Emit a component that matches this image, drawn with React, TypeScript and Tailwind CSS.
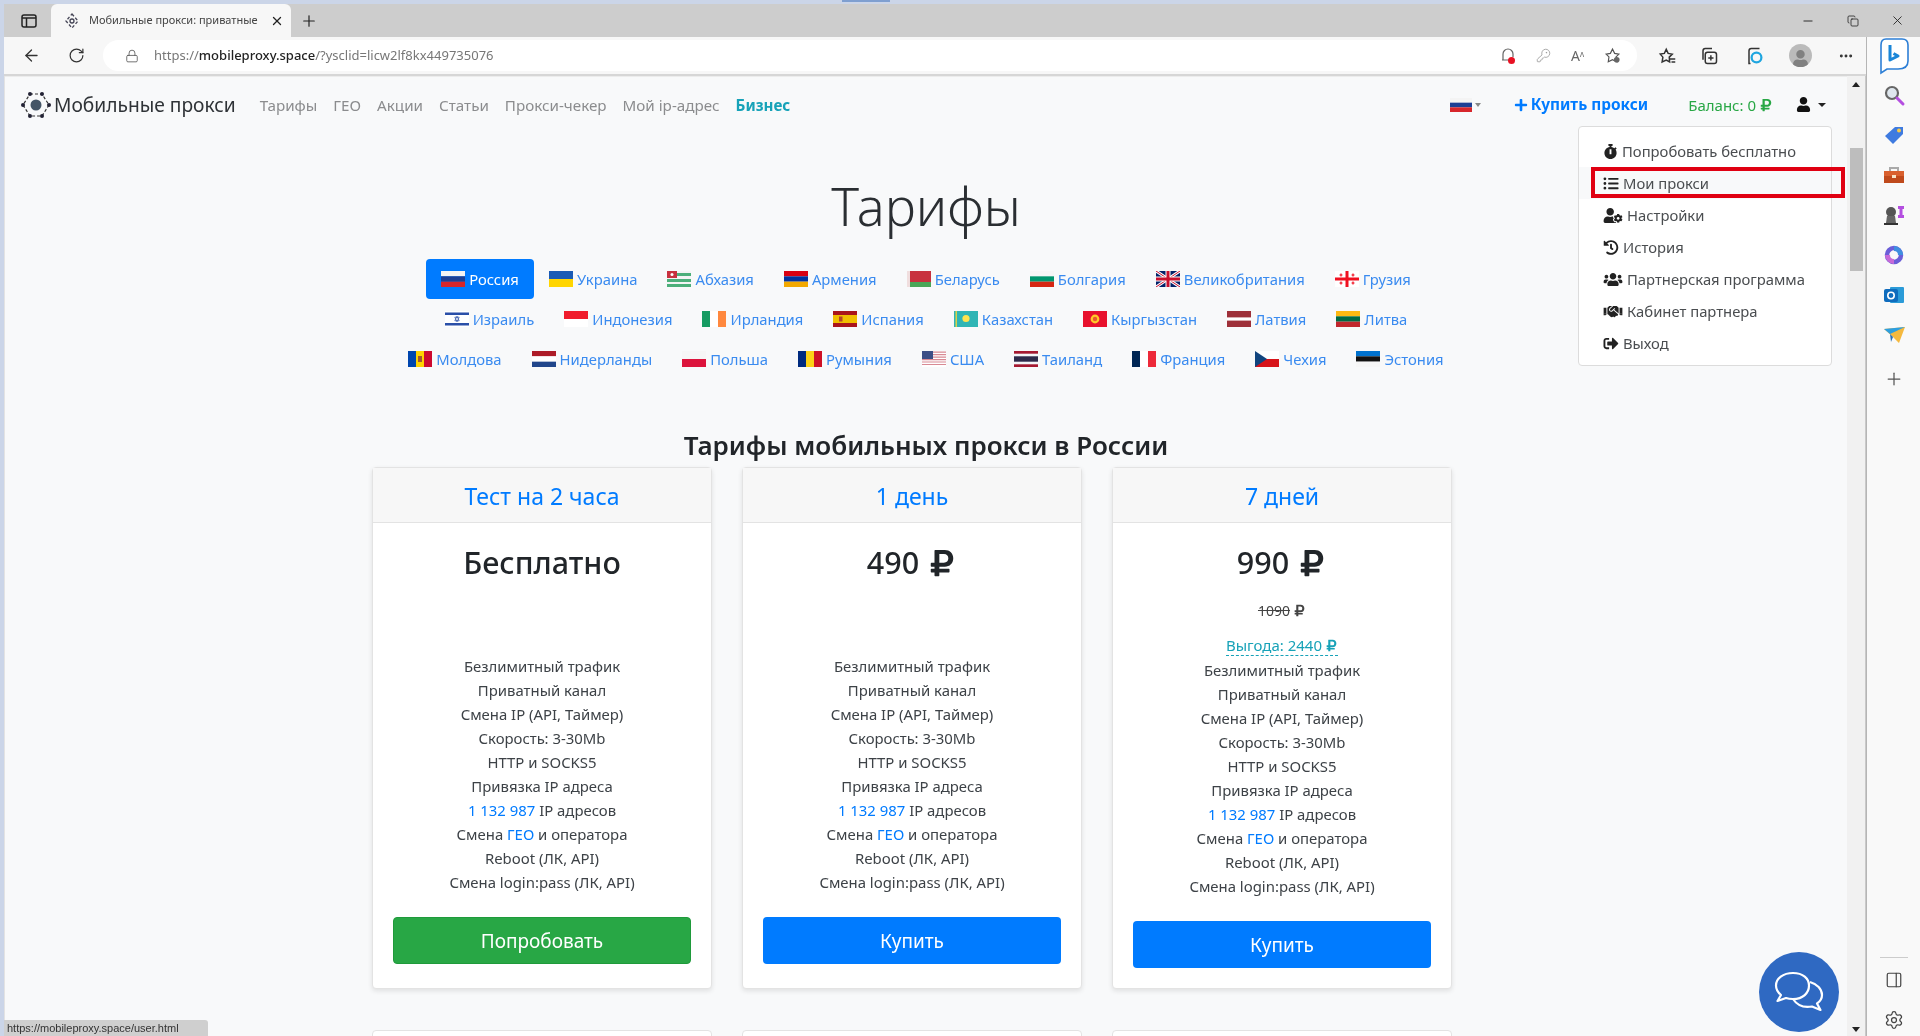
import React from "react";
import { ArrowLeft, RotateCw, Lock, Plus, X, Minus, Copy, Ellipsis, KeyRound, PanelRight, Settings } from "lucide-react";
import { FaPlus, FaUser, FaRubleSign, FaStopwatch, FaListUl, FaUserCog, FaHistory, FaUsers, FaHandshake, FaSignOutAlt } from "react-icons/fa";

const F = ({ children }: { children: React.ReactNode }) => (
  <svg width="24" height="16" viewBox="0 0 24 16" className="shrink-0">{children}</svg>
);
const H3 = ({ a, b, c }: { a: string; b: string; c: string }) => (
  <F>
    <rect width="24" height="5.34" fill={a} />
    <rect y="5.33" width="24" height="5.34" fill={b} />
    <rect y="10.66" width="24" height="5.34" fill={c} />
  </F>
);
const V3 = ({ a, b, c }: { a: string; b: string; c: string }) => (
  <F>
    <rect width="8" height="16" fill={a} />
    <rect x="8" width="8" height="16" fill={b} />
    <rect x="16" width="8" height="16" fill={c} />
  </F>
);
const flags: Record<string, React.ReactNode> = {
  ru: <H3 a="#f4f4f4" b="#1c3f94" c="#d7262b" />,
  ua: <F><rect width="24" height="8" fill="#1a5bb5" /><rect y="8" width="24" height="8" fill="#ffd500" /></F>,
  ab: <F><rect width="24" height="16" fill="#f4f4f4" /><rect y="2" width="24" height="3" fill="#4caf7a" /><rect y="8" width="24" height="3" fill="#4caf7a" /><rect y="13" width="24" height="3" fill="#4caf7a" /><rect width="10" height="7" fill="#c8313e" /><circle cx="5" cy="3.5" r="1.5" fill="#fff" /></F>,
  am: <H3 a="#d90012" b="#0033a0" c="#f2a800" />,
  by: <F><rect width="24" height="11" fill="#c8313e" /><rect y="11" width="24" height="5" fill="#4aa657" /><rect width="3" height="16" fill="#f0dede" /></F>,
  bg: <H3 a="#f6f6f6" b="#00966e" c="#d62612" />,
  gb: <F><rect width="24" height="16" fill="#012169" /><path d="M0 0L24 16M24 0L0 16" stroke="#fff" strokeWidth="3" /><path d="M0 0L24 16M24 0L0 16" stroke="#c8102e" strokeWidth="1" /><path d="M12 0V16M0 8H24" stroke="#fff" strokeWidth="5" /><path d="M12 0V16M0 8H24" stroke="#c8102e" strokeWidth="3" /></F>,
  ge: <F><rect width="24" height="16" fill="#fff" /><path d="M12 0V16M0 8H24" stroke="#f01020" strokeWidth="3" /><path d="M6 2.5V5.5M4.5 4H7.5M18 2.5V5.5M16.5 4H19.5M6 10.5V13.5M4.5 12H7.5M18 10.5V13.5M16.5 12H19.5" stroke="#f01020" strokeWidth="1.2" /></F>,
  il: <F><rect width="24" height="16" fill="#fff" /><rect y="1.5" width="24" height="2.5" fill="#2a4fa8" /><rect y="12" width="24" height="2.5" fill="#2a4fa8" /><path d="M12 5.2L14.2 9.8H9.8ZM12 10.8L9.8 6.2H14.2Z" fill="none" stroke="#2a4fa8" strokeWidth=".7" /></F>,
  id: <F><rect width="24" height="8" fill="#f01c2c" /><rect y="8" width="24" height="8" fill="#fff" /></F>,
  ie: <V3 a="#169b62" b="#fff" c="#ff883e" />,
  es: <F><rect width="24" height="16" fill="#aa151b" /><rect y="4" width="24" height="8" fill="#f1bf00" /><rect x="6" y="5.5" width="3.5" height="5" fill="#b5452a" /></F>,
  kz: <F><rect width="24" height="16" fill="#2fb5b5" /><circle cx="12" cy="7.5" r="3.6" fill="#ffe34d" /><rect x="1.5" width="1.5" height="16" fill="#d9d24a" /></F>,
  kg: <F><rect width="24" height="16" fill="#e8112d" /><circle cx="12" cy="8" r="4.4" fill="#ffca28" /><circle cx="12" cy="8" r="2.2" fill="#e8592d" /></F>,
  lv: <F><rect width="24" height="16" fill="#9e3039" /><rect y="6.4" width="24" height="3.2" fill="#fff" /></F>,
  lt: <H3 a="#fdb913" b="#006a44" c="#c1272d" />,
  md: <F><rect width="8" height="16" fill="#0046ae" /><rect x="8" width="8" height="16" fill="#ffd200" /><rect x="16" width="8" height="16" fill="#cc092f" /><rect x="10" y="5" width="4" height="6" fill="#a1572f" /></F>,
  nl: <H3 a="#ae1c28" b="#fff" c="#21468b" />,
  pl: <F><rect width="24" height="8" fill="#f6f6f6" /><rect y="8" width="24" height="8" fill="#dc143c" /></F>,
  ro: <V3 a="#002b7f" b="#fcd116" c="#ce1126" />,
  us: <F><rect width="24" height="16" fill="#fff" /><path d="M0 1.2H24M0 3.7H24M0 6.1H24M0 8.6H24M0 11H24M0 13.5H24" stroke="#d88a94" strokeWidth="1.2" /><rect width="11" height="8" fill="#3c4f86" /></F>,
  th: <F><rect width="24" height="16" fill="#a51931" /><rect y="2.7" width="24" height="10.6" fill="#f4f5f8" /><rect y="5.3" width="24" height="5.4" fill="#2d2a4a" /></F>,
  fr: <V3 a="#002654" b="#fff" c="#ed2939" />,
  cz: <F><rect width="24" height="8" fill="#fff" /><rect y="8" width="24" height="8" fill="#d7141a" /><path d="M0 0L12 8L0 16Z" fill="#11457e" /></F>,
  ee: <H3 a="#0072ce" b="#111" c="#f6f6f6" />,
};

const rows: [string, string][][] = [
  [["ru", "Россия"], ["ua", "Украина"], ["ab", "Абхазия"], ["am", "Армения"], ["by", "Беларусь"], ["bg", "Болгария"], ["gb", "Великобритания"], ["ge", "Грузия"]],
  [["il", "Израиль"], ["id", "Индонезия"], ["ie", "Ирландия"], ["es", "Испания"], ["kz", "Казахстан"], ["kg", "Кыргызстан"], ["lv", "Латвия"], ["lt", "Литва"]],
  [["md", "Молдова"], ["nl", "Нидерланды"], ["pl", "Польша"], ["ro", "Румыния"], ["us", "США"], ["th", "Таиланд"], ["fr", "Франция"], ["cz", "Чехия"], ["ee", "Эстония"]],
];

const features: React.ReactNode[] = [
  "Безлимитный трафик",
  "Приватный канал",
  "Смена IP (API, Таймер)",
  "Скорость: 3-30Mb",
  "HTTP и SOCKS5",
  "Привязка IP адреса",
  <><span className="text-[#007bff]">1 132 987</span> IP адресов</>,
  <>Смена <span className="text-[#007bff]">ГЕО</span> и оператора</>,
  "Reboot (ЛК, API)",
  "Смена login:pass (ЛК, API)",
];

const menu = [
  [FaStopwatch, "Попробовать бесплатно", false, "w-[15px]"],
  [FaListUl, "Мои прокси", true, "w-[16px]"],
  [FaUserCog, "Настройки", false, "w-[20px]"],
  [FaHistory, "История", false, "w-[16px]"],
  [FaUsers, "Партнерская программа", false, "w-[20px]"],
  [FaHandshake, "Кабинет партнера", false, "w-[20px]"],
  [FaSignOutAlt, "Выход", false, "w-[16px]"],
] as const;

function Card({ title, price, extra, button, green }: { title: string; price: React.ReactNode; extra: React.ReactNode; button: string; green?: boolean }) {
  return (
    <div className="flex flex-col bg-white border border-[#e3e3e3] rounded-[4px] shadow-[0_2px_5px_rgba(0,0,0,0.1)]">
      <div className="h-[55px] pt-[2px] bg-[#f7f7f7] border-b border-[#e3e3e3] flex items-center justify-center text-[23px] text-[#007bff]">{title}</div>
      <div className="flex-1 px-[20px] pt-[16px] pb-[20px] text-center">
        <div className="h-[48px] flex items-center justify-center gap-2 text-[30.500px] font-medium text-[#212529]">{price}</div>
        {extra}
        <div className="text-[14.900px] leading-[24px] text-[#3d4247]">
          {features.map((f, i) => (
            <div key={i}>{f}</div>
          ))}
        </div>
        <button className={`mt-[23px] w-full h-[47px] pt-[2px] rounded-[4px] text-white text-[19px] ${green ? "bg-[#28a745] border border-[#1f9a3b]" : "bg-[#007bff]"}`}>{button}</button>
      </div>
    </div>
  );
}

const BingLogo = () => (
  <svg width="32" height="38" viewBox="0 0 32 38" fill="none">
    <path d="M8 2H24Q30 2 30 8V24Q30 32 20 32H9L3 36V8Q3 2 8 2Z" stroke="#2d7fd6" strokeWidth="1.6" fill="#fff" />
    <path d="M12 8V23L20 19L15.5 16.5" stroke="#1a86d8" strokeWidth="3" strokeLinejoin="round" />
  </svg>
);

const Side = () => (
  <aside className="w-[54px] shrink-0 border-l border-[#b5b5b5] bg-[#f9f9f9] flex flex-col items-center">
    <div className="h-[36px] mt-[1px] flex items-center"><BingLogo /></div>
    <div className="flex flex-col items-center gap-[16px] mt-[9px]">
      <svg width="24" height="24" viewBox="0 0 24 24" fill="none"><circle cx="10" cy="10" r="6" fill="#dfe7ee" stroke="#666" strokeWidth="2.200" /><path d="M15 15L21 21" stroke="#b44fe0" strokeWidth="3" strokeLinecap="round" /></svg>
      <svg width="24" height="24" viewBox="0 0 24 24"><path d="M3 13L13 4H21V11L11 21Z" fill="#3f7be0" /><circle cx="17" cy="7.5" r="2" fill="#f7c948" /></svg>
      <svg width="24" height="24" viewBox="0 0 24 24"><path d="M8 8V5H16V8" fill="none" stroke="#aaa" strokeWidth="2" /><rect x="2" y="8" width="20" height="5" fill="#d9602e" /><rect x="2" y="13" width="20" height="7" fill="#bf4a1c" /><rect x="10" y="12" width="4" height="3" fill="#f7e4c8" /></svg>
      <svg width="24" height="24" viewBox="0 0 24 24"><circle cx="9" cy="9" r="5" fill="#555" /><path d="M5 13H13L14 20H4Z" fill="#666" /><rect x="2" y="20" width="14" height="2" fill="#333" /><path d="M16 3H22V6H20.5V12H22V15H16V12H17.5V6H16Z" fill="#b44fe0" /></svg>
      <svg width="24" height="24" viewBox="0 0 24 24"><circle cx="12" cy="12" r="7" fill="none" stroke="#6b5ed8" strokeWidth="4.500" /><path d="M12 3A9 9 0 0 1 21 12L16 12A4 4 0 0 0 12 8Z" fill="#3f8fe0" /><path d="M3 12A9 9 0 0 0 12 21V16A4 4 0 0 1 8 12Z" fill="#c76ad8" /></svg>
      <svg width="24" height="24" viewBox="0 0 24 24"><rect x="8" y="4" width="14" height="16" rx="1" fill="#2b9bd8" /><rect x="2" y="6" width="14" height="13" rx="2" fill="#0f6cbd" /><circle cx="9" cy="12.5" r="3.2" fill="none" stroke="#fff" strokeWidth="1.6" /></svg>
      <svg width="24" height="24" viewBox="0 0 24 24"><path d="M2 6L23 4L17 20L11 14Z" fill="#f5b93f" /><path d="M2 6L23 4L8 11Z" fill="#2d9fe0" /><path d="M8 11L11 14L9 19Z" fill="#2a6fb8" /></svg>
    </div>
    <div className="mt-[22px]"><Plus size={20} color="#555" strokeWidth={1.5} /></div>
    <div className="mt-auto flex flex-col items-center">
      <div className="w-[28px] h-[1px] bg-[#ccc]" />
      <PanelRight size={18} color="#444" strokeWidth={1.6} className="mt-[13px]" />
      <Settings size={20} color="#444" strokeWidth={1.5} className="mt-[21px] mb-[6px]" />
    </div>
  </aside>
);

export default function App() {
  return (
    <div className="w-[1920px] h-[1036px] overflow-hidden flex flex-col bg-[#cbd5e8] text-[#212529] [font-family:'Noto_Sans','Open_Sans',sans-serif] blur-[0.5px]">
      <div className="h-[4px] shrink-0 pl-[842px]"><div className="w-[48px] h-[2px] bg-[#7f9fd0]" /></div>
      <div className="h-[33px] shrink-0 ml-[4px] bg-[#cdcdcd] flex items-end text-[#222]">
        <div className="w-[47px] h-full flex items-center pl-[17px]">
          <svg width="16" height="16" viewBox="0 0 16 16" fill="none" stroke="#222" strokeWidth="1.5"><rect x="1" y="2" width="14" height="12" rx="2" /><path d="M1 5H15M5.5 5V14" /></svg>
        </div>
        <div className="w-[240px] h-[33px] bg-[#f7f7f7] rounded-t-[6px] flex items-center pl-[13px] pr-[7px]">
          <svg width="16" height="16" viewBox="0 0 16 16" fill="none" stroke="#445" strokeWidth="1.3"><path d="M8 1L14 8L8 15L2 8Z" strokeDasharray="3 2" /><circle cx="8" cy="8" r="2" /></svg>
          <span className="ml-[9px] text-[11px] flex-1 whitespace-nowrap overflow-hidden text-[#444]">Мобильные прокси: приватные</span>
          <X size={14} strokeWidth={2.2} className="ml-2" />
        </div>
        <div className="h-full flex items-center ml-[9px]"><Plus size={18} strokeWidth={1.6} /></div>
        <div className="ml-auto h-full flex items-center pr-[15px]">
          <Minus size={14} strokeWidth={1.6} />
          <Copy size={12} strokeWidth={1.6} className="ml-[32px]" />
          <X size={15} strokeWidth={1.4} className="ml-[31px]" />
        </div>
      </div>
      <div className="flex-1 min-h-0 flex ml-[4px]">
        <div className="flex-1 min-w-0 flex flex-col">
          <div className="h-[39px] shrink-0 bg-[#f7f7f7] border-b-2 border-[#d6d6d6] flex items-center text-[#333]">
            <ArrowLeft size={19} strokeWidth={1.6} className="ml-[18px]" />
            <RotateCw size={17} strokeWidth={1.7} className="ml-[27px]" />
            <div className="ml-[18px] w-[1534px] h-[31px] bg-white rounded-full flex items-center pl-[22px] pr-[16px]">
              <Lock size={14} strokeWidth={1.4} color="#555" />
              <span className="ml-[15px] text-[13px] text-[#777]">https://<span className="text-[#222] font-medium">mobileproxy.space</span>/?ysclid=licw2lf8kx449735076</span>
              <div className="ml-auto flex items-center gap-[20px]">
                <svg width="16" height="18" viewBox="0 0 16 18" fill="none" stroke="#666" strokeWidth="1.2"><path d="M3 13V7A5 5 0 0 1 13 7V10M2 13H9" /><circle cx="11.5" cy="13.5" r="3.5" fill="#e81123" stroke="none" /></svg>
                <KeyRound size={15} color="#999" strokeWidth={1.3} />
                <span className="text-[14px] text-[#666] leading-none">A<sup className="text-[8px]">ʌ</sup></span>
                <svg width="17" height="17" viewBox="0 0 24 24" fill="none" stroke="#555" strokeWidth="1.6"><path d="M12 3L15 9L21 10L17 14L18 21L12 18L6 21L7 14L3 10L9 9Z" /><circle cx="18" cy="18" r="4" fill="#666" stroke="none" /></svg>
              </div>
            </div>
            <svg className="ml-[21px]" width="18" height="18" viewBox="0 0 24 24" fill="none" stroke="#333" strokeWidth="2"><path d="M11 3L13.5 8.5L19 9.500L15 13.500L15.500 20L11 17.500L5.500 20L6.500 13.500L3 9.500L8.500 8.500Z" /><path d="M16 16H23M18 20H23" /></svg>
            <svg className="ml-[24px]" width="18" height="18" viewBox="0 0 24 24" fill="none" stroke="#333" strokeWidth="2"><rect x="7" y="7" width="15" height="15" rx="3" /><path d="M4 17V5Q4 2 7 2H16M14.500 11V18M11 14.500H18" /></svg>
            <svg className="ml-[28px]" width="18" height="20" viewBox="0 0 24 24" fill="none" strokeWidth="2"><path d="M6 22H4V5Q4 2 7 2H18" stroke="#333" /><circle cx="14" cy="14" r="6.500" stroke="#1fa6e0" strokeWidth="3" /></svg>
            <div className="ml-[25px] w-[23px] h-[23px] rounded-full bg-[#bbb] flex items-end justify-center overflow-hidden"><FaUser size={17} color="#808080" /></div>
            <Ellipsis size={16} strokeWidth={2.4} className="ml-[26px]" />
          </div>
          <div className="flex-1 min-h-0 flex border-l border-[#e3e3e3]">
            <main className="relative flex-1 min-w-0 overflow-hidden bg-[#f8f9fa] border-t border-[#ececec]">
              <nav className="h-[56px] flex items-center pl-[16px] pr-[21px]">
                <svg width="30" height="30" viewBox="0 0 30 30" fill="none" stroke="#333" strokeWidth="1.2">
                  <path d="M9 4H21L28 15L21 26H9L2 15Z" strokeDasharray="3 2" />
                  <circle cx="15" cy="15" r="5.500" fill="#456" stroke="none" />
                  <circle cx="9" cy="4" r="2" fill="#223" stroke="none" /><circle cx="21" cy="4" r="2" fill="#223" stroke="none" /><circle cx="9" cy="26" r="2" fill="#223" stroke="none" /><circle cx="21" cy="26" r="2" fill="#223" stroke="none" /><circle cx="2" cy="15" r="2" fill="#223" stroke="none" /><circle cx="28" cy="15" r="2" fill="#223" stroke="none" />
                </svg>
                <span className="ml-[3px] text-[19.200px] text-[#2f3337]">Мобильные прокси</span>
                <div className="ml-[24px] flex items-center gap-[16px] text-[15.200px] text-[#8b8c8e]">
                  <span>Тарифы</span><span>ГЕО</span><span>Акции</span><span>Статьи</span><span>Прокси-чекер</span><span>Мой ip-адрес</span>
                  <span className="font-bold text-[#17a2b8]">Бизнес</span>
                </div>
                <div className="ml-auto flex items-center">
                  <svg width="22" height="14" viewBox="0 0 24 16" preserveAspectRatio="none"><rect width="24" height="5.340" fill="#f4f4f4" /><rect y="5.330" width="24" height="5.340" fill="#1c3f94" /><rect y="10.660" width="24" height="5.340" fill="#d7262b" /></svg>
                  <span className="ml-[3px] w-0 h-0 border-x-[3.500px] border-x-transparent border-t-[4px] border-t-[#888]" />
                  <span className="ml-[33px] flex items-center gap-[3px] text-[15.400px] font-bold text-[#007bff]"><FaPlus size={14} />Купить прокси</span>
                  <span className="ml-[40px] flex items-center gap-[3px] text-[15px] text-[#28a745]">Баланс: 0 <FaRubleSign size={14} /></span>
                  <FaUser size={15} color="#111" className="ml-[23px]" />
                  <span className="ml-[7px] w-0 h-0 border-x-[4px] border-x-transparent border-t-[4.500px] border-t-[#222]" />
                </div>
              </nav>
              <h1 className="mt-[39px] h-[67px] leading-[67px] text-center text-[52.400px] font-light text-[#2a2e32]">Тарифы</h1>
              <div className="mt-[20px] flex flex-col items-center">
                {rows.map((r, i) => (
                  <div key={i} className="flex justify-center h-[40px]">
                    {r.map(([code, name]) => {
                      const active = code === "ru";
                      return (
                        <div key={code} className={`flex items-center gap-[4px] px-[15px] rounded-[4px] text-[14.800px] ${active ? "bg-[#007bff] text-white" : "text-[#3a8bf0]"}`}>
                          {flags[code]}
                          <span>{name}</span>
                        </div>
                      );
                    })}
                  </div>
                ))}
              </div>
              <h2 className="mt-[51px] h-[30px] leading-[30px] text-center text-[26px] font-semibold text-[#212529]">Тарифы мобильных прокси в России</h2>
              <div className="mt-[7px] ml-[367px] w-[1080px] grid grid-cols-[repeat(3,340px)] gap-x-[30px] gap-y-[41px]">
                <Card
                  title="Тест на 2 часа"
                  price="Бесплатно"
                  extra={<div className="h-[67px]" />}
                  button="Попробовать"
                  green
                />
                <Card
                  title="1 день"
                  price={<>490 <FaRubleSign size={30} /></>}
                  extra={<div className="h-[67px]" />}
                  button="Купить"
                />
                <Card
                  title="7 дней"
                  price={<>990 <FaRubleSign size={30} /></>}
                  extra={
                    <>
                      <div className="mt-[11px] h-[24px] flex items-center justify-center">
                        <span className="inline-flex items-center gap-[3px] text-[14px] line-through relative text-[#444]">1090 <FaRubleSign size={13} /></span>
                      </div>
                      <div className="mt-[11px] h-[25px] flex items-center justify-center">
                        <span className="inline-flex items-center gap-[3px] text-[15px] text-[#17a2b8] border-b border-dashed border-[#17a2b8] leading-[19px]">Выгода: 2440 <FaRubleSign size={13} /></span>
                      </div>
                    </>
                  }
                  button="Купить"
                />
                <div className="h-[60px] bg-white border border-[#e3e3e3] rounded-[4px]" />
                <div className="h-[60px] bg-white border border-[#e3e3e3] rounded-[4px]" />
                <div className="h-[60px] bg-white border border-[#e3e3e3] rounded-[4px]" />
              </div>

              <div className="absolute left-[1573px] top-[49px] w-[254px] h-[240px] bg-white border border-[#dcdcdc] rounded-[4px] py-[8px]">
                {menu.map(([Icon, label, hover, w]) => (
                  <div key={label} className={`h-[32px] pl-[24px] flex items-center gap-[4px] text-[14.800px] text-[#4a4d50] ${hover ? "bg-[#f8f9fa]" : ""}`}>
                    <Icon className={`${w} h-[15px] shrink-0 text-[#222]`} />
                    <span>{label}</span>
                  </div>
                ))}
              </div>
              <div className="absolute left-[1586px] top-[90px] w-[254px] h-[31px] border-[4px] border-[#e00012]" />
              <div className="absolute left-[1754px] top-[875px] w-[80px] h-[80px] rounded-full bg-[#2f69c2] flex items-center justify-center">
                <svg width="52" height="44" viewBox="0 0 52 44" fill="none" stroke="#fff" strokeWidth="2.200" strokeLinejoin="round">
                  <path d="M20 3C10 3 3 8.500 3 15.500C3 19.500 5 22.500 8 25L4.500 31L13 28C15 28.700 17.500 29 20 29C30 29 36 23 36 15.500C36 8.500 30 3 20 3Z" />
                  <path d="M37 12C44 14 49 19 49 25C49 28.500 47 31.500 44 33.500L47.500 40L39 36.500C31 38 24 35 20 29" />
                </svg>
              </div>
            </main>
            <div className="w-[19px] shrink-0 bg-[#f1f1f1] border-r border-[#c9c9c9] flex flex-col items-center">
              <div className="mt-[6px] w-0 h-0 border-x-[4px] border-x-transparent border-b-[5px] border-b-[#222]" />
              <div className="mt-[61px] w-[13px] h-[123px] bg-[#bdbdbd]" />
              <div className="mt-auto mb-[4px] w-0 h-0 border-x-[4px] border-x-transparent border-t-[5px] border-t-[#222]" />
            </div>
          </div>
        </div>
        <Side />
      </div>
      <div className="absolute left-[4px] top-[1020px] w-[204px] h-[16px] bg-[#cfcfcf] rounded-tr-[3px] pl-[3px] text-[11px] leading-[16px] text-[#333] [font-family:'Liberation_Sans',sans-serif]">https://mobileproxy.space/user.html</div>
    </div>
  );
}
